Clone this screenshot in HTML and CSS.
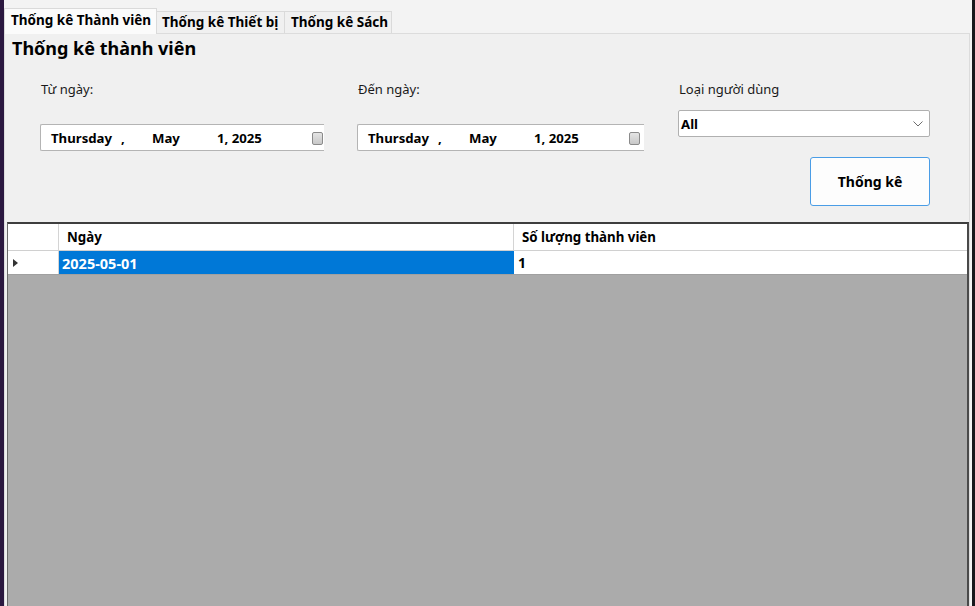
FILE: index.html
```html
<!DOCTYPE html>
<html lang="vi">
<head>
<meta charset="utf-8">
<title>Thống kê</title>
<link rel="stylesheet" href="styles.css">
</head>
<body>
<div class="app">
  <div class="edge-left"></div>
  <div class="main">
    <div class="tabs">
      <div class="tab active">Thống kê Thành viên</div>
      <div class="tab">Thống kê Thiết bị</div>
      <div class="tab">Thống kê Sách</div>
    </div>
    <div class="panel">
      <h1 class="title">Thống kê thành viên</h1>
      <div class="form">
        <div class="col col-from">
          <div class="label">Từ ngày:</div>
          <div class="picker">
            <span class="seg seg-day">Thursday</span><span class="seg seg-comma">,</span><span class="seg seg-month">May</span><span class="seg seg-year">1, 2025</span><span class="cal"></span>
          </div>
        </div>
        <div class="col col-to">
          <div class="label">Đến ngày:</div>
          <div class="picker">
            <span class="seg seg-day">Thursday</span><span class="seg seg-comma">,</span><span class="seg seg-month">May</span><span class="seg seg-year">1, 2025</span><span class="cal"></span>
          </div>
        </div>
        <div class="col col-type">
          <div class="label label-type">Loại người dùng</div>
          <div class="combo">
            <span class="combo-text">All</span>
            <svg class="chev" width="10" height="6" viewBox="0 0 10 6"><path d="M0.5 0.5 L5 5 L9.5 0.5" fill="none" stroke="#6d6d6d" stroke-width="1"/></svg>
          </div>
          <button class="btn">Thống kê</button>
        </div>
      </div>
      <div class="grid">
        <div class="row head">
          <div class="rh"></div>
          <div class="cell c1">Ngày</div>
          <div class="cell c2">Số lượng thành viên</div>
        </div>
        <div class="row data">
          <div class="rh"><span class="tri"></span></div>
          <div class="cell c1 sel">2025-05-01</div>
          <div class="cell c2">1</div>
        </div>
        <div class="empty"></div>
      </div>
    </div>
  </div>
  <div class="edge-right"></div>
</div>
</body>
</html>
```

FILE: styles.css
```css
* { box-sizing: border-box; }
html, body { margin: 0; padding: 0; }
body {
  font-family: "Noto Sans", "Open Sans", sans-serif;
  color: #000;
  background: #f3f3f3;
  width: 975px;
  height: 606px;
  overflow: hidden;
}
.app {
  display: flex;
  height: 606px;
}
.edge-left {
  width: 4px;
  background: #2b1840;
  flex: none;
}
.edge-right {
  width: 3px;
  background: #18181c;
  flex: none;
}
.main {
  flex: 1;
  display: flex;
  flex-direction: column;
  padding-top: 8px;
  background: #f3f3f3;
  min-width: 0;
}
.tabs {
  display: flex;
  align-items: flex-end;
  height: 25px;
  position: relative;
  z-index: 1;
}
.tab {
  font-size: 13.5px;
  font-weight: 700;
  height: 22px;
  line-height: 20px;
  padding: 0 5px;
  background: #f0f0f0;
  border: 1px solid #dadada;
  border-bottom: none;
  margin-left: -1px;
  white-space: nowrap;
}
.tab.active {
  height: 26px;
  margin-bottom: -1px;
  line-height: 22px;
  padding: 0 6px;
  margin-left: 0;
  background: #fbfbfb;
  width: 153px;
}
.tab:nth-child(2) { width: 129px; padding-left: 5px; }
.tab:nth-child(3) { width: 108px; padding-left: 6px; }
.panel {
  flex: 1;
  width: 966px;
  background: #f0f0f0;
  border: 1px solid #dcdcdc;
  border-bottom: none;
  display: flex;
  flex-direction: column;
  min-height: 0;
}
.title {
  margin: 0;
  font-size: 18px;
  font-weight: 700;
  line-height: 24px;
  padding: 2px 0 0 7px;
}
.form {
  display: flex;
  padding-left: 35px;
  height: 162px;
}
.col { display: flex; flex-direction: column; }
.col-from { width: 317px; }
.col-to { width: 322px; }
.col-type { width: 252px; margin-left: -1px; }
.label {
  font-size: 13px;
  line-height: 18px;
  margin-top: 20px;
  padding-left: 1px;
  color: #1a1a1a;
}
.picker {
  margin-top: 26px;
  height: 27px;
  background: #fff;
  border: 1px solid #b4b4b4;
  border-right: none;
  border-radius: 2px 0 0 2px;
  display: flex;
  align-items: center;
  font-size: 13.2px;
  font-weight: 700;
  padding-left: 10px;
}
.col-from .picker { width: 284px; }
.col-to .picker { width: 287px; }
.seg { white-space: nowrap; }
.seg-day { width: 70px; }
.seg-comma { width: 31px; }
.seg-month { width: 65px; }
.seg-year { width: 95px; }
.cal {
  width: 11px;
  height: 13px;
  background: linear-gradient(#e4e4e4, #c8c8c8);
  border: 1px solid #8a8a8a;
  border-radius: 2px;
  margin-left: 0;
  margin-top: 1px;
}
.label-type { margin-top: 20px; }
.combo {
  margin-top: 12px;
  height: 27px;
  background: #fff;
  border: 1px solid #b0b0b0;
  border-radius: 2px;
  display: flex;
  align-items: center;
  justify-content: space-between;
  padding: 0 6px 0 2px;
  font-size: 13.2px;
  font-weight: 700;
}
.chev { margin-top: 1px; }
.btn {
  align-self: flex-end;
  margin-top: 20px;
  width: 120px;
  height: 49px;
  background: #fdfdfd;
  border: 1px solid #4a9de6;
  border-radius: 3px;
  font-family: inherit;
  font-size: 14px;
  font-weight: 700;
  color: #000;
  padding: 0;
}
.grid {
  flex: 1;
  margin: 0 0 0 2px;
  width: 962px;
  background: #ababab;
  border-top: 2px solid #3e3e3e;
  border-left: 1px solid #6a6a6a;
  border-right: 2px solid #4a4a4a;
  display: flex;
  flex-direction: column;
}
.row {
  display: flex;
  background: #fff;
}
.row.head { height: 27px; border-bottom: 1px solid #d0d0d0; }
.row.data { height: 24px; border-bottom: 1px solid #a0a0a0; }
.rh {
  width: 51px;
  border-right: 1px solid #d4d4d4;
  display: flex;
  align-items: center;
  padding-left: 5px;
}
.tri {
  width: 0;
  height: 0;
  border-top: 4px solid transparent;
  border-bottom: 4px solid transparent;
  border-left: 5px solid #333;
}
.cell {
  font-size: 13.3px;
  font-weight: 700;
  display: flex;
  align-items: center;
  white-space: nowrap;
}
.head .c1 { width: 455px; padding-left: 8px; border-right: 1px solid #d4d4d4; }
.head .c2 { flex: 1; padding-left: 8px; }
.data .c1 { width: 455px; padding-left: 3px; font-size: 14.5px; }
.data .c2 { flex: 1; padding-left: 4px; font-size: 14px; }
.sel { background: #0078d7; color: #fff; }
.empty { flex: 1; }
```
